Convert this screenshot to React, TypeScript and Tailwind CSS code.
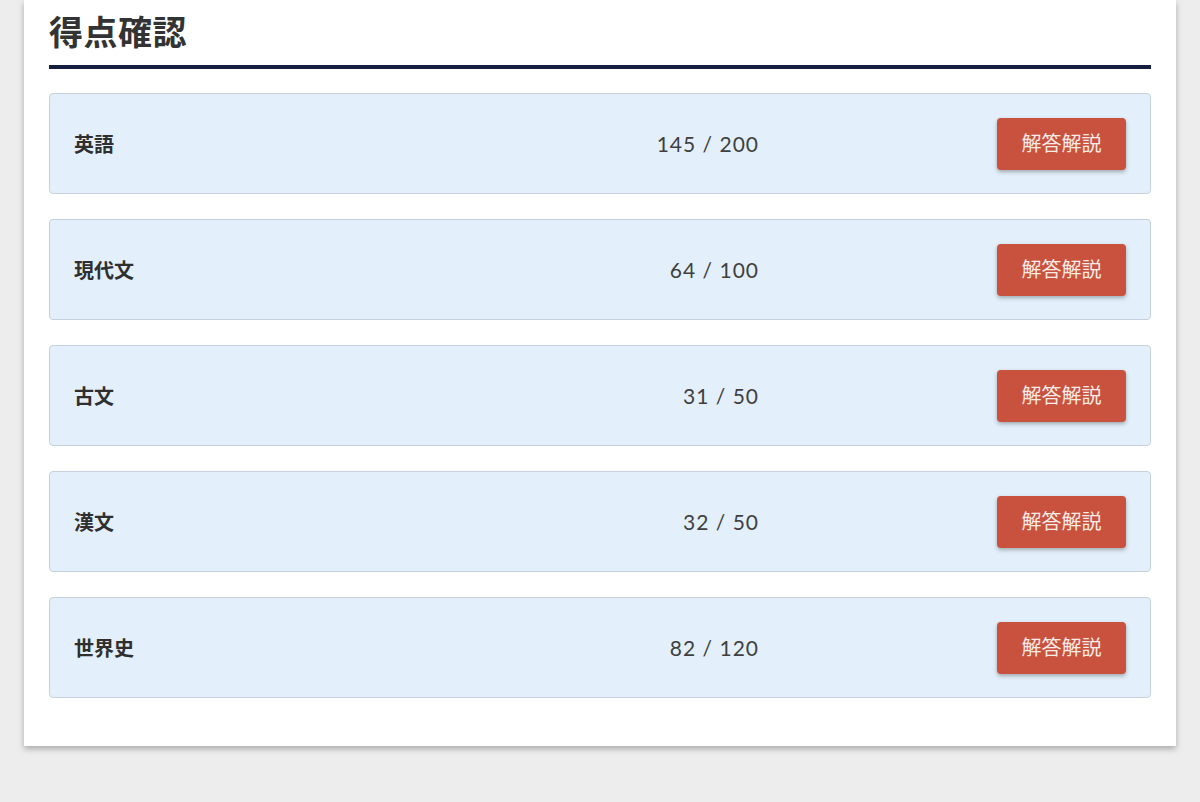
import React from 'react';

const scores = [
  { subject: '英語', score: 145, max: 200 },
  { subject: '現代文', score: 64, max: 100 },
  { subject: '古文', score: 31, max: 50 },
  { subject: '漢文', score: 32, max: 50 },
  { subject: '世界史', score: 82, max: 120 },
];

const App: React.FC = () => {
  return (
    <div
      className="min-h-[802px] bg-[#ededed] px-6"
      style={{ fontFamily: '"Noto Sans", "Noto Sans CJK JP", sans-serif' }}
    >
      <div className="bg-white px-[25px] pt-[12px] pb-[48px] shadow-[0_3px_6px_rgba(0,0,0,0.28)]">
        {/* Title */}
        <h1 className="text-[34px] leading-[41px] font-bold text-[#333333] pb-[12px] border-b-4 border-[#161f40] tracking-[0.5px]">
          得点確認
        </h1>

        {/* Score list */}
        <div className="mt-6 flex flex-col gap-[25px]">
          {scores.map((row) => (
            <div
              key={row.subject}
              className="h-[101px] flex items-center pl-6 pr-6 bg-[#e3f0fb] border border-[#c6d1dd] rounded"
            >
              <div className="flex-1 mt-[3px] text-[20px] font-bold text-[#2f2f2f]">{row.subject}</div>
              <div
                className="text-[21px] text-[#3f3f3f] tracking-[1px]"
                style={{ fontFamily: 'Lato, "Noto Sans", sans-serif' }}
              >
                {row.score} / {row.max}
              </div>
              <button className="ml-[238px] w-[129px] h-[52px] rounded bg-[#c8523d] text-[#f8ebe7] text-[20px] shadow-[0_2px_4px_rgba(0,0,0,0.3)]">
                解答解説
              </button>
            </div>
          ))}
        </div>
      </div>
    </div>
  );
};

export default App;
